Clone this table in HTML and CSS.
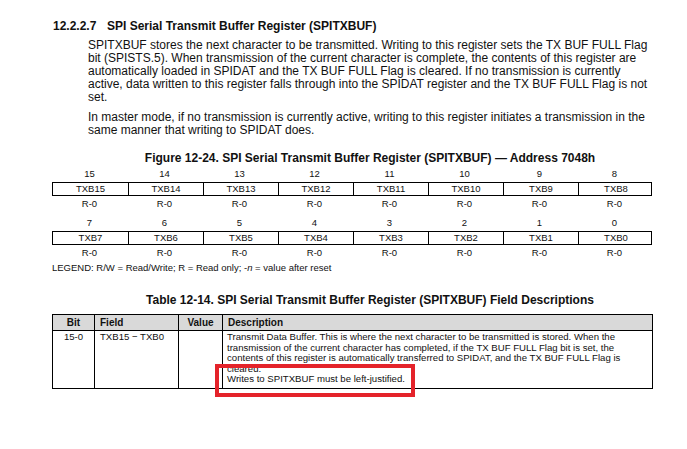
FILE: index.html
```html
<!DOCTYPE html>
<html>
<head>
<meta charset="utf-8">
<link rel="stylesheet" href="styles.css">
</head>
<body>
<div class="page">
  <h1 class="heading"><span class="num">12.2.2.7</span><span>SPI Serial Transmit Buffer Register (SPITXBUF)</span></h1>
  <p class="para">SPITXBUF stores the next character to be transmitted. Writing to this register sets the TX BUF FULL Flag<br>bit (SPISTS.5). When transmission of the current character is complete, the contents of this register are<br>automatically loaded in SPIDAT and the TX BUF FULL Flag is cleared. If no transmission is currently<br>active, data written to this register falls through into the SPIDAT register and the TX BUF FULL Flag is not<br>set.</p>
  <p class="para para2">In master mode, if no transmission is currently active, writing to this register initiates a transmission in the<br>same manner that writing to SPIDAT does.</p>

  <div class="caption fig-caption">Figure 12-24. SPI Serial Transmit Buffer Register (SPITXBUF) — Address 7048h</div>

  <div class="reg">
    <div class="reg-block">
      <div class="bits"><span>15</span><span>14</span><span>13</span><span>12</span><span>11</span><span>10</span><span>9</span><span>8</span></div>
      <div class="cells"><span>TXB15</span><span>TXB14</span><span>TXB13</span><span>TXB12</span><span>TXB11</span><span>TXB10</span><span>TXB9</span><span>TXB8</span></div>
      <div class="resets"><span>R-0</span><span>R-0</span><span>R-0</span><span>R-0</span><span>R-0</span><span>R-0</span><span>R-0</span><span>R-0</span></div>
    </div>
    <div class="reg-block">
      <div class="bits"><span>7</span><span>6</span><span>5</span><span>4</span><span>3</span><span>2</span><span>1</span><span>0</span></div>
      <div class="cells"><span>TXB7</span><span>TXB6</span><span>TXB5</span><span>TXB4</span><span>TXB3</span><span>TXB2</span><span>TXB1</span><span>TXB0</span></div>
      <div class="resets"><span>R-0</span><span>R-0</span><span>R-0</span><span>R-0</span><span>R-0</span><span>R-0</span><span>R-0</span><span>R-0</span></div>
    </div>
    <div class="legend">LEGEND: R/W = Read/Write; R = Read only; -<i>n</i> = value after reset</div>
  </div>

  <div class="caption tbl-caption">Table 12-14. SPI Serial Transmit Buffer Register (SPITXBUF) Field Descriptions</div>

  <table class="fields">
    <colgroup>
      <col class="c-bit"><col class="c-field"><col class="c-value"><col class="c-desc">
    </colgroup>
    <thead>
      <tr><th class="center">Bit</th><th>Field</th><th class="center">Value</th><th>Description</th></tr>
    </thead>
    <tbody>
      <tr>
        <td class="center">15-0</td>
        <td>TXB15 − TXB0</td>
        <td></td>
        <td class="desc">Transmit Data Buffer. This is where the next character to be transmitted is stored. When the<br>transmission of the current character has completed, if the TX BUF FULL Flag bit is set, the<br>contents of this register is automatically transferred to SPIDAT, and the TX BUF FULL Flag is<br>cleared.<br>Writes to SPITXBUF must be left-justified.</td>
      </tr>
    </tbody>
  </table>

  <div class="highlight"></div>
</div>
</body>
</html>
```

FILE: styles.css
```css
html, body {
  margin: 0;
  padding: 0;
  background: #ffffff;
}

body {
  font-family: "Liberation Sans", Arial, sans-serif;
  color: #111111;
}

.page {
  position: relative;
  width: 687px;
  height: 449px;
  padding: 20px 0 0 52px;
  box-sizing: border-box;
}

.heading {
  display: flex;
  margin: 0 0 0 1px;
  font-size: 12px;
  line-height: 13px;
  font-weight: bold;
}

.heading .num {
  width: 54px;
}

.para {
  margin: 6px 0 0 36px;
  font-size: 12px;
  line-height: 13px;
  white-space: nowrap;
}

.para2 {
  margin-top: 7px;
}

.caption {
  width: 636px;
  text-align: center;
  font-size: 12px;
  line-height: 14px;
  font-weight: bold;
}

.fig-caption {
  margin-top: 14px;
}

.reg {
  width: 600px;
  font-size: 9.5px;
}

.reg-block {
  margin-bottom: 3px;
}

.bits, .cells, .resets {
  display: grid;
  grid-template-columns: repeat(8, 75px);
  text-align: center;
}

.bits {
  height: 16px;
  line-height: 15px;
  margin-top: 1px;
}

.cells {
  border: 1px solid #000;
  box-sizing: border-box;
  width: 600px;
  height: 14px;
  line-height: 12px;
}

.cells span + span {
  border-left: 1px solid #000;
}

.resets {
  height: 16px;
  line-height: 16px;
}

.legend {
  margin-top: -2px;
  line-height: 12px;
  white-space: nowrap;
}

.tbl-caption {
  margin-top: 19px;
}

.fields {
  margin-top: 7px;
  width: 600px;
  border-collapse: collapse;
  table-layout: fixed;
  font-size: 9.6px;
}

.c-bit { width: 42px; }
.c-field { width: 84px; }
.c-value { width: 44px; }
.c-desc { width: 430px; }

.fields th, .fields td {
  border: 1px solid #000;
  padding: 0 0 0 5px;
  text-align: left;
  vertical-align: top;
}

.fields th {
  background: #d9d9d9;
  font-weight: bold;
  height: 15px;
  line-height: 15px;
  font-size: 10px;
}

.fields td {
  height: 58px;
  padding-top: 1px;
  line-height: 10.5px;
  box-sizing: border-box;
}

.fields .center {
  text-align: center;
  padding-left: 0;
}

.fields .desc {
  padding-left: 4px;
  white-space: nowrap;
}

.highlight {
  position: absolute;
  left: 215px;
  top: 364px;
  width: 200px;
  height: 33px;
  border: 4px solid #e4232a;
  box-sizing: border-box;
}
```
